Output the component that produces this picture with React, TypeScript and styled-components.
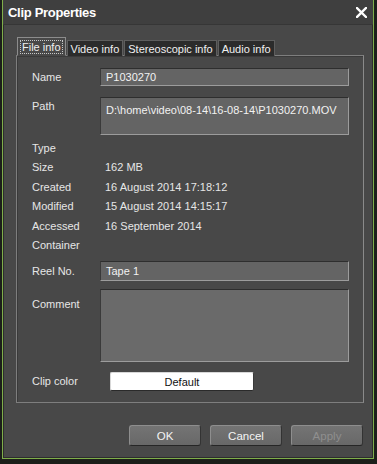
import React from 'react'
import styled, { createGlobalStyle } from 'styled-components'

const GlobalStyle = createGlobalStyle`
  html, body {
    margin: 0;
    padding: 0;
    background: #1c1f1a;
  }
`

const Window = styled.div`
  margin-left: 2px;
  width: 370px;
  height: 458px;
  border: 1px solid #7fae4a;
  border-top: none;
  box-shadow: inset 0 0 0 1px #2d2d2d;
  background: #484848;
  display: flex;
  flex-direction: column;
  font-family: "Liberation Sans", Arial, sans-serif;
  font-size: 11px;
  color: #e6e6e6;
`

const TitleBar = styled.div`
  height: 24px;
  display: flex;
  align-items: center;
  justify-content: space-between;
  padding: 0 5px 0 5px;
  background: #3f3f3f;
  border-bottom: 1px solid #363636;
`

const Title = styled.span`
  font-weight: bold;
  font-size: 13px;
  color: #ffffff;
  letter-spacing: -0.3px;
`

const CloseButton = styled.button`
  width: 14px;
  height: 14px;
  padding: 0;
  border: none;
  background: transparent;
  display: flex;
  align-items: center;
  justify-content: center;
`

const Body = styled.div`
  flex: 1;
  display: flex;
  flex-direction: column;
  padding: 12px 9px 0 13px;
`

const TabStrip = styled.div`
  display: flex;
  align-items: flex-end;
  height: 19px;
  padding-left: 1px;
  position: relative;
  z-index: 1;
`

const Tab = styled.div<{ $active?: boolean }>`
  height: ${({ $active }) => ($active ? '19px' : '16px')};
  padding: 0 3px;
  margin-right: 1px;
  display: flex;
  align-items: center;
  box-sizing: border-box;
  background: ${({ $active }) => ($active ? '#484848' : '#2b2b2b')};
  border: 1px solid ${({ $active }) => ($active ? '#8c8c8c' : '#5e5e5e')};
  border-bottom: ${({ $active }) => ($active ? '1px solid #484848' : 'none')};
  color: #f0f0f0;
  white-space: nowrap;
`

const FocusLabel = styled.span`
  outline: 1px dotted #c8c8c8;
  padding: 0 1px;
`

const Panel = styled.div`
  width: 348px;
  height: 348px;
  box-sizing: border-box;
  margin-top: -1px;
  border: 1px solid #7e7e7e;
  border-right-color: #8a8a8a;
  box-shadow: inset 1px 1px 0 #3a3a3a;
  padding: 12px 14px 0 15px;
  display: flex;
  flex-direction: column;
`

const FieldRow = styled.div<{ $gap?: number }>`
  display: grid;
  grid-template-columns: 68px 1fr;
  align-items: start;
  margin-top: ${({ $gap }) => $gap ?? 0}px;
`

const InfoList = styled.div`
  margin-top: 3px;
`

const InfoRow = styled.div`
  display: grid;
  grid-template-columns: 73px 1fr;
  height: 19.5px;
  align-items: center;
`

const Label = styled.span<{ $pad?: number }>`
  padding-top: ${({ $pad }) => $pad ?? 0}px;
  line-height: 14px;
`

const Input = styled.div<{ $height: number; $bg?: string }>`
  height: ${({ $height }) => $height}px;
  box-sizing: border-box;
  background: ${({ $bg }) => $bg ?? '#646464'};
  border: 1px solid #9c9c9c;
  border-top-color: #2e2e2e;
  border-left-color: #3a3a3a;
  padding: 1px 5px;
  display: flex;
  align-items: ${({ $height }) => ($height > 22 ? 'flex-start' : 'center')};
  padding-top: ${({ $height }) => ($height > 22 ? '6px' : '1px')};
  color: #f2f2f2;
  white-space: nowrap;
`

const ColorButton = styled.button`
  margin-left: 10px;
  width: 144px;
  height: 19px;
  border: 1px solid #d8d8d8;
  border-bottom-color: #2a2a2a;
  border-right-color: #3a3a3a;
  border-radius: 2px;
  background: #ffffff;
  font-family: "Liberation Sans", Arial, sans-serif;
  font-size: 11px;
  color: #111;
  padding: 0;
`

const Footer = styled.div`
  display: flex;
  justify-content: flex-end;
  gap: 9px;
  padding: 22px 1px 0 0;
`

const DialogButton = styled.button<{ $disabled?: boolean }>`
  width: 72px;
  height: 21px;
  border: 1px solid #8e8e8e;
  border-bottom-color: #262626;
  border-right-color: #333;
  border-radius: 3px;
  background: linear-gradient(#747474, #686868);
  color: ${({ $disabled }) => ($disabled ? '#8f8f8f' : '#f4f4f4')};
  font-family: "Liberation Sans", Arial, sans-serif;
  font-size: 11.5px;
  padding: 0;
`

const info = [
  ['Type', ''],
  ['Size', '162 MB'],
  ['Created', '16 August 2014 17:18:12'],
  ['Modified', '15 August 2014 14:15:17'],
  ['Accessed', '16 September 2014'],
  ['Container', ''],
]

export default function App() {
  return (
    <>
      <GlobalStyle />
      <Window>
        <TitleBar>
          <Title>Clip Properties</Title>
          <CloseButton aria-label="Close">
            <svg width="11" height="11" viewBox="0 0 11 11">
              <path d="M1 1 L10 10 M10 1 L1 10" stroke="#ffffff" strokeWidth="2.4" strokeLinecap="square" />
            </svg>
          </CloseButton>
        </TitleBar>
        <Body>
          <TabStrip>
            <Tab $active>
              <FocusLabel>File info</FocusLabel>
            </Tab>
            <Tab>Video info</Tab>
            <Tab>Stereoscopic info</Tab>
            <Tab>Audio info</Tab>
          </TabStrip>
          <Panel>
            <FieldRow>
              <Label $pad={2}>Name</Label>
              <Input $height={18}>P1030270</Input>
            </FieldRow>
            <FieldRow $gap={11}>
              <Label $pad={2}>Path</Label>
              <Input $height={38}>D:\home\video\08-14\16-08-14\P1030270.MOV</Input>
            </FieldRow>
            <InfoList>
              {info.map(([k, v]) => (
                <InfoRow key={k}>
                  <span>{k}</span>
                  <span>{v}</span>
                </InfoRow>
              ))}
            </InfoList>
            <FieldRow $gap={6}>
              <Label $pad={3}>Reel No.</Label>
              <Input $height={20}>Tape 1</Input>
            </FieldRow>
            <FieldRow $gap={8}>
              <Label $pad={8}>Comment</Label>
              <Input $height={73} $bg="#6a6a6a" />
            </FieldRow>
            <FieldRow $gap={10}>
              <Label $pad={2}>Clip color</Label>
              <ColorButton>Default</ColorButton>
            </FieldRow>
          </Panel>
          <Footer>
            <DialogButton>OK</DialogButton>
            <DialogButton>Cancel</DialogButton>
            <DialogButton $disabled>Apply</DialogButton>
          </Footer>
        </Body>
      </Window>
    </>
  )
}
